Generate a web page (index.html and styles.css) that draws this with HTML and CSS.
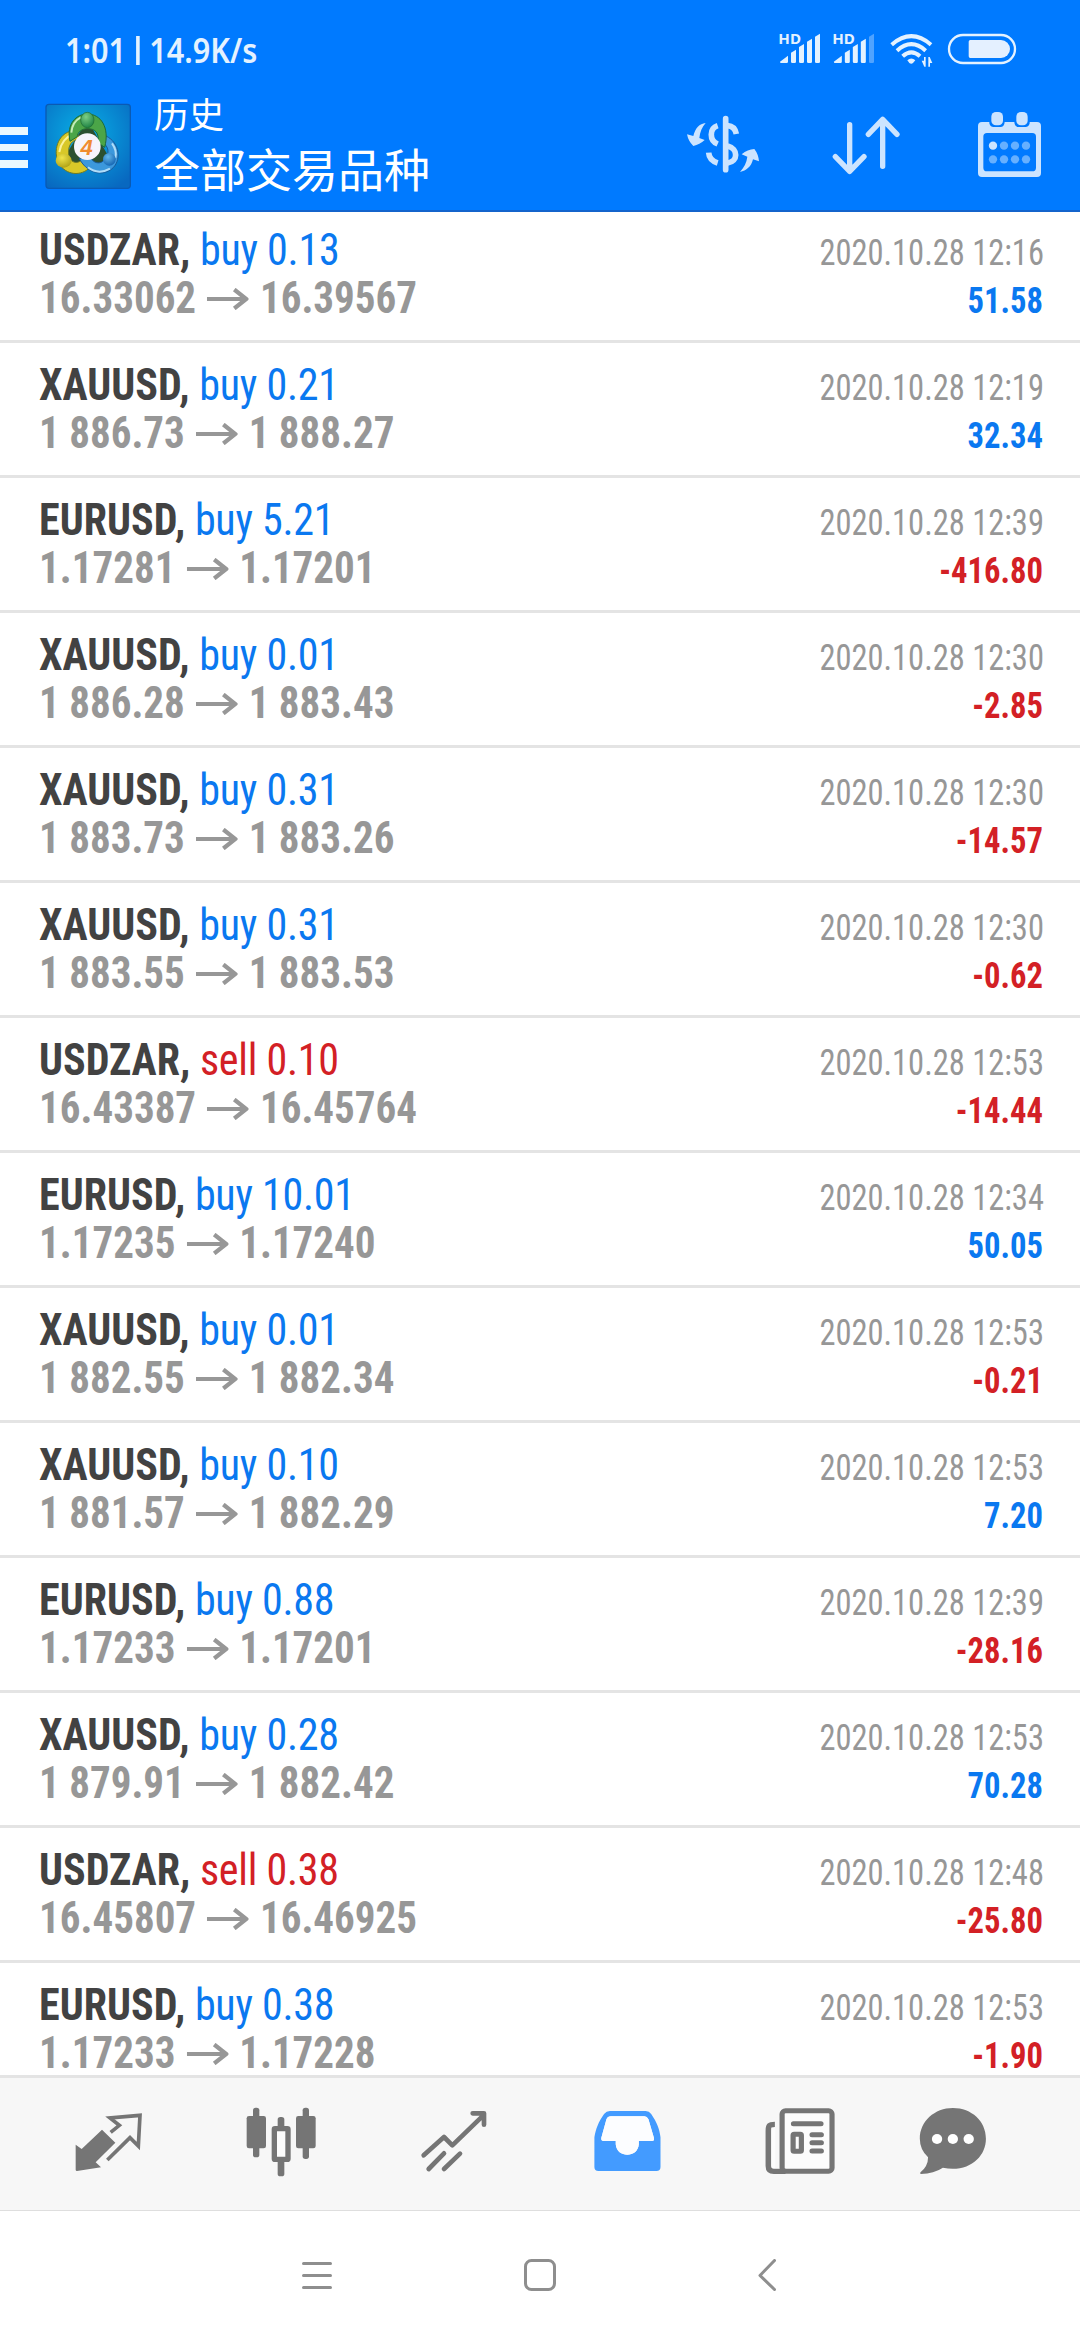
FILE: index.html
```html
<!DOCTYPE html>
<html lang="zh-CN">
<head>
<meta charset="utf-8">
<title>历史</title>
<link rel="stylesheet" href="styles.css">
</head>
<body>
<svg width="0" height="0" class="defs" aria-hidden="true">
  <defs>
    <symbol id="arrow" viewBox="0 0 42 22" preserveAspectRatio="none"><path d="M0 11H39M27.500 1.500 39.500 11 27.500 20.500" fill="none" stroke="currentColor" stroke-width="4.200"/></symbol>
  </defs>
</svg>

<header class="header">
  <div class="status">
    <div class="clock">1:01<i></i>14.9K/s</div>
    <svg class="signals" viewBox="348 90 729 120">
      <g fill="#e4f2ff">
        <g id="sig">
          <text x="355" y="132" class="hd" textLength="68" lengthAdjust="spacingAndGlyphs">HD</text>
          <path d="M360 185 384 167V185Q384 189 380 189H363Q360 189 360 185ZM393 158 408 149V185Q408 189 404 189H397Q393 189 393 185ZM417 141 432 132V185Q432 189 428 189H421Q417 189 417 185ZM441 125 456 116V185Q456 189 452 189H445Q441 189 441 185Z"/>
        </g>
        <path d="M465 110 480 101V185Q480 189 476 189H469Q465 189 465 185Z"/>
        <use href="#sig" x="161.500"/>
        <path opacity=".35" d="M627 110 642 101V185Q642 189 638 189H631Q627 189 627 185Z"/>
        <path d="M742 181Q754 170 766 181L759 189Q754 194 748 189Z"/>
        <path d="M785 182H792V171H797V200H793ZM805 171V200H810V189H817L809 171Z"/>
      </g>
      <g fill="none" stroke="#e4f2ff" stroke-width="12">
        <path d="M695 134Q754 83 813 134M711 152Q754 113 797 152M728 169Q754 145 780 169"/>
        <rect x="867" y="105" width="198" height="84" rx="42" stroke-width="7"/>
      </g>
      <path fill="#e4f0ff" d="M931 120H1023A27 27 0 0 1 1023 174H931Q926 174 926 169V125Q926 120 931 120Z"/>
    </svg>
  </div>
  <div class="toolbar">
    <div class="menu"><i></i><i></i><i></i></div>
    <svg class="logo" viewBox="45 39 261 261">
      <defs>
        <radialGradient id="bg" cx=".45" cy=".35" r=".75"><stop offset="0" stop-color="#08b0e6"/><stop offset="1" stop-color="#0868c0"/></radialGradient>
        <radialGradient id="gr" cx=".4" cy=".3" r=".8"><stop offset="0" stop-color="#7ccf86"/><stop offset="1" stop-color="#147a3c"/></radialGradient>
        <radialGradient id="ye" cx=".4" cy=".3" r=".8"><stop offset="0" stop-color="#f0e44a"/><stop offset="1" stop-color="#a89a10"/></radialGradient>
        <radialGradient id="bl" cx=".4" cy=".3" r=".8"><stop offset="0" stop-color="#64b8ec"/><stop offset="1" stop-color="#0c5cac"/></radialGradient>
      </defs>
      <rect x="48" y="43" width="253" height="252" rx="9" fill="url(#bg)" stroke="#0a5ab4" stroke-width="4"/>
      <path d="M172 90 245 215 200 230 172 200 140 235 95 215Z" fill="#2b5030"/>
      <path d="M136 122C88 122 68 176 84 214C100 252 146 262 176 236L158 206C144 226 118 218 116 192C114 166 124 150 150 146Z" fill="#d8c828" stroke="#6f7a22" stroke-width="3"/>
      <path d="M88 186Q94 146 132 130" fill="none" stroke="#fbf29a" stroke-width="6"/>
      <path d="M228 138C270 158 276 214 244 238C210 262 168 244 148 206L182 204C196 226 220 222 230 200C238 184 234 168 218 158Z" fill="#3c98dc" stroke="#1a5a98" stroke-width="3"/>
      <path d="M174 232Q204 256 240 236M246 160Q262 182 256 204" fill="none" stroke="#b0dcf8" stroke-width="6"/>
      <path d="M120 154C108 100 140 72 172 72C212 72 240 112 224 172L204 158C208 128 196 116 172 116C154 116 142 128 142 140Z" fill="#4ba548" stroke="#1f6a34" stroke-width="3"/>
      <path d="M124 128Q126 96 152 82" fill="none" stroke="#c4ecb8" stroke-width="6"/>
      <ellipse cx="172" cy="90" rx="20" ry="23" fill="url(#gr)" stroke="#1f6a34" stroke-width="2"/>
      <ellipse cx="101" cy="212" rx="24" ry="21" fill="url(#ye)"/>
      <ellipse cx="238" cy="208" rx="19" ry="19" fill="url(#bl)"/>
      <circle cx="172" cy="170" r="40" fill="#f6f4fb"/>
      <text x="170" y="195" class="four">4</text>
    </svg>
    <div class="titles">
      <div class="title">历史</div>
      <div class="subtitle">全部交易品种</div>
    </div>
    <svg class="action" viewBox="60 324 252 216">
      <g fill="#cce4ff">
        <path d="M134 369C115 371 103 384 97 408L78 403Q82 424 97 438Q116 434 131 420L115 414C117 396 123 382 134 369Z"/>
        <path d="M237 516C256 512 271 500 276 478L294 484Q292 462 280 447Q260 448 242 463L259 470C257 488 249 502 237 516Z"/>
      </g>
      <g fill="none" stroke="#cce4ff" stroke-width="17">
        <path d="M194 356V509" stroke-linecap="round"/>
        <path d="M170 377C145 385 144 421 170 432M143 458C144 474 154 484 170 489"/>
        <path d="M200 377C215 378 223 387 226 402M200 438C232 446 232 485 200 489"/>
      </g>
    </svg>
    <svg class="action" viewBox="489 324 252 216">
      <path fill="none" stroke="#cce4ff" stroke-width="16" stroke-linecap="round" stroke-linejoin="round" d="M566 374V514M523 470 566 514 609 470M665 499V358M622 403 665 358 708 403"/>
    </svg>
    <svg class="action" viewBox="918 324 252 216">
      <path fill="#cce4ff" fill-rule="evenodd" d="M963 366H985V370Q987 381 998 381H1018Q1030 381 1031 366H1060Q1061 381 1073 381H1093Q1104 381 1106 370V366H1128Q1140 366 1140 378V519Q1140 531 1128 531H963Q951 531 951 519V378Q951 366 963 366ZM978 399Q967 399 967 410V503Q967 514 978 514H1114Q1125 514 1125 503V410Q1125 399 1114 399Z"/>
      <rect x="991" y="336" width="35" height="40" rx="14" fill="#cce4ff"/>
      <rect x="1066" y="336" width="34" height="40" rx="14" fill="#cce4ff"/>
      <circle cx="996" cy="437" r="12.500" fill="#cce4ff"/>
      <g fill="#66b0ff"><circle cx="1029" cy="437" r="12.500"/><circle cx="1062" cy="437" r="12.500"/><circle cx="1095" cy="437" r="12.500"/><circle cx="996" cy="478" r="12.500"/><circle cx="1029" cy="478" r="12.500"/><circle cx="1062" cy="478" r="12.500"/><circle cx="1095" cy="478" r="12.500"/></g>
    </svg>
  </div>
</header>

<main class="list">
  <div class="row"><div class="deal"><div class="sym"><b>USDZAR,</b> <span class="buy">buy 0.13</span></div><div class="price">16.33062<svg><use href="#arrow"/></svg>16.39567</div></div><div class="info"><div class="date">2020.10.28 12:16</div><div class="val buy">51.58</div></div></div>
  <div class="row"><div class="deal"><div class="sym"><b>XAUUSD,</b> <span class="buy">buy 0.21</span></div><div class="price">1 886.73<svg><use href="#arrow"/></svg>1 888.27</div></div><div class="info"><div class="date">2020.10.28 12:19</div><div class="val buy">32.34</div></div></div>
  <div class="row"><div class="deal"><div class="sym"><b>EURUSD,</b> <span class="buy">buy 5.21</span></div><div class="price">1.17281<svg><use href="#arrow"/></svg>1.17201</div></div><div class="info"><div class="date">2020.10.28 12:39</div><div class="val sell">-416.80</div></div></div>
  <div class="row"><div class="deal"><div class="sym"><b>XAUUSD,</b> <span class="buy">buy 0.01</span></div><div class="price">1 886.28<svg><use href="#arrow"/></svg>1 883.43</div></div><div class="info"><div class="date">2020.10.28 12:30</div><div class="val sell">-2.85</div></div></div>
  <div class="row"><div class="deal"><div class="sym"><b>XAUUSD,</b> <span class="buy">buy 0.31</span></div><div class="price">1 883.73<svg><use href="#arrow"/></svg>1 883.26</div></div><div class="info"><div class="date">2020.10.28 12:30</div><div class="val sell">-14.57</div></div></div>
  <div class="row"><div class="deal"><div class="sym"><b>XAUUSD,</b> <span class="buy">buy 0.31</span></div><div class="price">1 883.55<svg><use href="#arrow"/></svg>1 883.53</div></div><div class="info"><div class="date">2020.10.28 12:30</div><div class="val sell">-0.62</div></div></div>
  <div class="row"><div class="deal"><div class="sym"><b>USDZAR,</b> <span class="sell">sell 0.10</span></div><div class="price">16.43387<svg><use href="#arrow"/></svg>16.45764</div></div><div class="info"><div class="date">2020.10.28 12:53</div><div class="val sell">-14.44</div></div></div>
  <div class="row"><div class="deal"><div class="sym"><b>EURUSD,</b> <span class="buy">buy 10.01</span></div><div class="price">1.17235<svg><use href="#arrow"/></svg>1.17240</div></div><div class="info"><div class="date">2020.10.28 12:34</div><div class="val buy">50.05</div></div></div>
  <div class="row"><div class="deal"><div class="sym"><b>XAUUSD,</b> <span class="buy">buy 0.01</span></div><div class="price">1 882.55<svg><use href="#arrow"/></svg>1 882.34</div></div><div class="info"><div class="date">2020.10.28 12:53</div><div class="val sell">-0.21</div></div></div>
  <div class="row"><div class="deal"><div class="sym"><b>XAUUSD,</b> <span class="buy">buy 0.10</span></div><div class="price">1 881.57<svg><use href="#arrow"/></svg>1 882.29</div></div><div class="info"><div class="date">2020.10.28 12:53</div><div class="val buy">7.20</div></div></div>
  <div class="row"><div class="deal"><div class="sym"><b>EURUSD,</b> <span class="buy">buy 0.88</span></div><div class="price">1.17233<svg><use href="#arrow"/></svg>1.17201</div></div><div class="info"><div class="date">2020.10.28 12:39</div><div class="val sell">-28.16</div></div></div>
  <div class="row"><div class="deal"><div class="sym"><b>XAUUSD,</b> <span class="buy">buy 0.28</span></div><div class="price">1 879.91<svg><use href="#arrow"/></svg>1 882.42</div></div><div class="info"><div class="date">2020.10.28 12:53</div><div class="val buy">70.28</div></div></div>
  <div class="row"><div class="deal"><div class="sym"><b>USDZAR,</b> <span class="sell">sell 0.38</span></div><div class="price">16.45807<svg><use href="#arrow"/></svg>16.46925</div></div><div class="info"><div class="date">2020.10.28 12:48</div><div class="val sell">-25.80</div></div></div>
  <div class="row"><div class="deal"><div class="sym"><b>EURUSD,</b> <span class="buy">buy 0.38</span></div><div class="price">1.17233<svg><use href="#arrow"/></svg>1.17228</div></div><div class="info"><div class="date">2020.10.28 12:53</div><div class="val sell">-1.90</div></div></div>
</main>

<nav class="tabs">
  <svg viewBox="78 126 252 240"><path fill="#757575" d="M186 209 226 248 167 307 183 322 111 333Q107 333 107 329V254L125 267Z"/><path fill="none" stroke="#757575" stroke-width="11" d="M212 217 238 196 210 174 300 166 295 258 270 233 202 300"/></svg>
  <svg viewBox="597 126 252 240"><g fill="#757575"><rect x="639" y="143" width="19" height="149" rx="8"/><rect x="620" y="168" width="58" height="97" rx="7"/><rect x="788" y="143" width="19" height="154" rx="8"/><rect x="768" y="168" width="59" height="97" rx="7"/><rect x="713" y="171" width="20" height="40" rx="8"/><rect x="713" y="292" width="20" height="57" rx="8"/></g><rect x="703" y="206" width="41" height="92" rx="2" fill="#fcfcfc" stroke="#757575" stroke-width="16"/></svg>
  <svg viewBox="1116 126 252 240"><path fill="none" stroke="#757575" stroke-width="14" stroke-linecap="round" stroke-linejoin="round" d="M1151 286 1212 231 1237 256 1330 166M1298 160H1332V194M1166 327 1212 280M1212 327 1260 281"/></svg>
  <svg viewBox="130.700 126 244 240" preserveAspectRatio="none"><path fill="#439bff" fill-rule="evenodd" d="M203 153H307Q317 153 323 162C340 188 347 206 350 232V321Q350 333 338 333H170Q158 333 158 321V232C162 206 170 186 186 162Q193 153 203 153ZM206 169Q196 169 193 178L178 234Q177 243 185 243H220V253C223 295 284 295 287 253V243H325Q333 243 331 234L315 178Q311 169 303 169Z"/><path fill="#fcfdff" d="M206 169Q196 169 193 178L178 234Q177 243 185 243H220V253C223 295 284 295 287 253V243H325Q333 243 331 234L315 178Q311 169 303 169Z"/></svg>
  <svg viewBox="636 126 244 240" preserveAspectRatio="none"><path fill="#fcfcfc" d="M700 146H850V334H670V195H700Z"/><g fill="none" stroke="#757575"><path stroke-width="16" d="M685 193C668 193 666 197 666 212V318Q666 334 682 334H716"/><path fill="#f7f7f7" stroke="none" d="M686 146H697V324H686Z"/><rect x="706" y="152" width="145" height="182" rx="10" stroke-width="15"/><path stroke-width="15" stroke-linecap="round" d="M739 191H819M793 224H820M793 248H820M793 273H820"/><rect x="738" y="223" width="24" height="51" rx="3" stroke-width="15"/></g></svg>
  <svg viewBox="1077.400 126 244 240" preserveAspectRatio="none"><path fill="#757575" d="M1199 144C1254 144 1295 184 1295 236C1295 292 1244 339 1170 323Q1144 341 1106 342Q1102 341 1105 337Q1127 319 1127 292Q1103 268 1103 236C1103 184 1146 144 1199 144Z"/><g fill="#fff"><circle cx="1153" cy="237" r="15"/><circle cx="1199" cy="237" r="15"/><circle cx="1245" cy="237" r="15"/></g></svg>
</nav>
<footer class="sysnav">
  <svg class="recent" viewBox="0 0 30 34"><path stroke="#8e8e8e" stroke-width="3" stroke-linecap="round" d="M1.500 4.500H28.500M1.500 16.500H28.500M1.500 28.500H28.500"/></svg>
  <svg class="home" viewBox="0 0 32 34"><rect x="1.500" y="1.500" width="29" height="29" rx="6" fill="none" stroke="#8e8e8e" stroke-width="3"/></svg>
  <svg class="back" viewBox="0 0 18 34"><path fill="none" stroke="#8e8e8e" stroke-width="3" stroke-linecap="round" stroke-linejoin="round" d="M16.500 1.500 2 16.500 16.500 30.500"/></svg>
</footer>
</body>
</html>
```
FILE: styles.css
```css
* { box-sizing: border-box; }
body {
  margin: 0;
  width: 1080px;
  height: 2340px;
  display: flex;
  flex-direction: column;
  overflow: hidden;
  background: #fff;
  font-family: "Roboto Condensed", Roboto, "Noto Sans CJK SC", sans-serif;
}
svg { display: block; flex: none; }
.defs { display: none; }

.header {
  flex: none;
  height: 212px;
  background: #007aff;
  border-bottom: 2px solid #1464cc;
}
.status {
  display: flex;
  justify-content: space-between;
  height: 96px;
  padding: 30px 61px 0 65px;
}
.clock {
  display: flex;
  align-items: center;
  height: 40px;
  font: 600 34px/40px "Noto Sans", sans-serif;
  color: #e4f2ff;
  white-space: pre;
  transform: scaleX(.9);
  transform-origin: 0 0;
}
.clock i { width: 4px; height: 29px; margin: 0 11px; background: #e4f2ff; }
.signals { width: 243px; height: 40px; }
.hd { font: 700 43px "Noto Sans", sans-serif; }
.toolbar { display: flex; height: 114px; }
.menu {
  width: 28px;
  margin: 31px 17px 0 0;
  display: flex;
  flex-direction: column;
  gap: 9px;
}
.menu i { height: 7.5px; background: #eaf8ff; }
.logo { width: 87px; height: 87px; margin-top: 7px; }
.four { font: italic 700 66px "Liberation Sans", sans-serif; fill: #f08c30; text-anchor: middle; }
.titles {
  flex: 1;
  padding-left: 22px;
  font-family: "Noto Sans CJK SC", sans-serif;
  color: #fff;
}
.title { font-size: 35px; line-height: 40px; margin-top: -3px; }
.subtitle { font-size: 46px; line-height: 60px; margin-top: 4px; }
.action { width: 84px; height: 72px; margin: 12px 0 0 59px; }
.action:last-child { margin-right: 29px; }

.list { height: 1863px; flex: none; overflow: hidden; }
.row {
  display: flex;
  justify-content: space-between;
  height: 135px;
  padding: 18px 37px 0 39px;
  border-bottom: 3px solid #e4e4e4;
  white-space: nowrap;
}
.row:first-child { height: 131px; padding-top: 14px; }
.sym, .price { font-size: 45px; line-height: 48px; transform-origin: 0 0; }
.sym { color: #424242; transform: scaleX(.935); }
.sym span { letter-spacing: -.3px; }
.price { color: #979797; font-weight: 700; display: flex; transform: scaleX(.912); }
.price svg { width: 46px; height: 22px; margin: 14px 12px 0; }
.info { padding-top: 3px; text-align: right; }
.date, .val { font-size: 36px; line-height: 48px; transform-origin: 100% 0; transform: scaleX(.905); }
.date { color: #979797; transform: translateX(1px) scaleX(.902); }
.val { font-weight: 700; }
.buy { color: #0a78f0; }
.sell { color: #d32025; }

.tabs {
  flex: none;
  display: flex;
  gap: 89px;
  height: 136px;
  padding: 24px 0 0 66px;
  background: #f7f7f7;
  border-top: 3px solid #e4e4e4;
  border-bottom: 1px solid #dedede;
}
.tabs svg { width: 84px; height: 80px; }
.tabs svg:last-child { margin-left: -20px; }
.sysnav { display: flex; padding: 48px 0 0 302px; }
.sysnav svg { height: 34px; }
.recent { width: 30px; }
.home { width: 32px; margin-left: 192px; }
.back { width: 18px; margin-left: 202px; }
```
